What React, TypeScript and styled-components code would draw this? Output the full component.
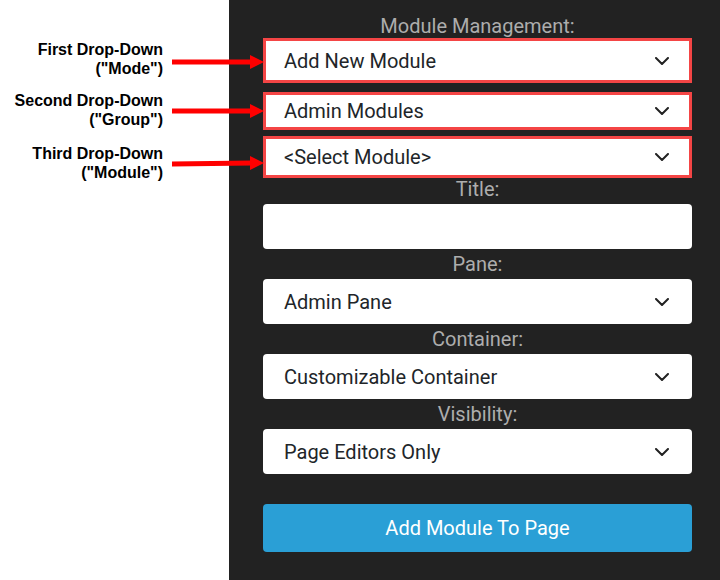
import React from 'react';
import styled, { createGlobalStyle } from 'styled-components';

const GlobalStyle = createGlobalStyle`
  html, body {
    margin: 0;
    padding: 0;
    background: #fff;
  }
`;

const Page = styled.div`
  display: flex;
  width: 720px;
  height: 580px;
  overflow: hidden;
`;

const NoteColumn = styled.div`
  width: 229px;
  flex-shrink: 0;
  display: flex;
  flex-direction: column;
  padding-top: 40px;
  box-sizing: border-box;
`;

const Note = styled.div<{ $top: number }>`
  display: flex;
  align-items: center;
  margin-top: ${(p) => p.$top}px;
`;

const NoteText = styled.div`
  width: 163px;
  flex-shrink: 0;
  text-align: right;
  white-space: nowrap;
  font-family: 'Liberation Sans', Arial, sans-serif;
  font-weight: bold;
  font-size: 16px;
  line-height: 19px;
  color: #000;
`;

const ArrowSvg = styled.svg`
  margin-left: 9px;
  flex-shrink: 0;
  position: relative;
  z-index: 2;
`;

const Panel = styled.div`
  flex: 1;
  background: #222;
  padding: 8px 28px 0 34px;
  display: flex;
  flex-direction: column;
  font-family: Roboto, 'Noto Sans', sans-serif;
`;

const Label = styled.div<{ $h?: number; $lh?: number }>`
  height: ${(p) => p.$h ?? 30}px;
  line-height: ${(p) => p.$lh ?? 30}px;
  text-align: center;
  color: #adadad;
  font-size: 20px;
`;

const Select = styled.div<{ $h?: number; $marked?: boolean; $gap?: number }>`
  box-sizing: border-box;
  height: ${(p) => p.$h ?? 45}px;
  margin-bottom: ${(p) => p.$gap ?? 0}px;
  background: #fff;
  border-radius: ${(p) => (p.$marked ? 0 : 4)}px;
  border: ${(p) => (p.$marked ? '3px solid #f44545' : 'none')};
  display: flex;
  align-items: center;
  justify-content: space-between;
  padding: 0 ${(p) => (p.$marked ? 20 : 23)}px 0 ${(p) => (p.$marked ? 18 : 21)}px;
  color: #212529;
  font-size: 20px;
`;

const TextInput = styled.div`
  height: 45px;
  background: #fff;
  border-radius: 4px;
`;

const Button = styled.button`
  margin-top: 30px;
  height: 48px;
  border: none;
  border-radius: 4px;
  background: #2a9fd6;
  color: #fff;
  font-family: Roboto, 'Noto Sans', sans-serif;
  font-size: 20px;
  cursor: pointer;
`;

const Chevron = () => (
  <svg width="14" height="8" viewBox="0 0 14 8">
    <polyline points="1,1 7,7 13,1" fill="none" stroke="#222" strokeWidth="2" strokeLinecap="round" strokeLinejoin="round" />
  </svg>
);

const Arrow = ({ y0, y1 }: { y0: number; y1: number }) => (
  <ArrowSvg width="92" height="20" viewBox="0 0 92 20">
    <line x1="0" y1={y0} x2="80" y2={y1} stroke="#f00" strokeWidth="5" />
    <polygon points={`78,${y1 - 7} 92,${y1} 78,${y1 + 7}`} fill="#f00" />
  </ArrowSvg>
);

const notes = [
  { title: 'First Drop-Down', sub: '("Mode")', top: 0, y0: 13, y1: 13 },
  { title: 'Second Drop-Down', sub: '("Group")', top: 13, y0: 11, y1: 11 },
  { title: 'Third Drop-Down', sub: '("Module")', top: 15, y0: 11, y1: 10 },
];

const App: React.FC = () => {
  return (
    <Page>
      <GlobalStyle />
      <NoteColumn>
        {notes.map((n) => (
          <Note key={n.title} $top={n.top}>
            <NoteText>
              {n.title}
              <br />
              {n.sub}
            </NoteText>
            <Arrow y0={n.y0} y1={n.y1} />
          </Note>
        ))}
      </NoteColumn>
      <Panel>
        <Label $lh={36}>Module Management:</Label>
        <Select $marked $h={45} $gap={9}>
          <span>Add New Module</span>
          <Chevron />
        </Select>
        <Select $marked $h={38} $gap={6}>
          <span>Admin Modules</span>
          <Chevron />
        </Select>
        <Select $marked $h={42}>
          <span>&lt;Select Module&gt;</span>
          <Chevron />
        </Select>
        <Label $h={26} $lh={22}>Title:</Label>
        <TextInput />
        <Label>Pane:</Label>
        <Select>
          <span>Admin Pane</span>
          <Chevron />
        </Select>
        <Label>Container:</Label>
        <Select>
          <span>Customizable Container</span>
          <Chevron />
        </Select>
        <Label>Visibility:</Label>
        <Select>
          <span>Page Editors Only</span>
          <Chevron />
        </Select>
        <Button>Add Module To Page</Button>
      </Panel>
    </Page>
  );
};

export default App;
